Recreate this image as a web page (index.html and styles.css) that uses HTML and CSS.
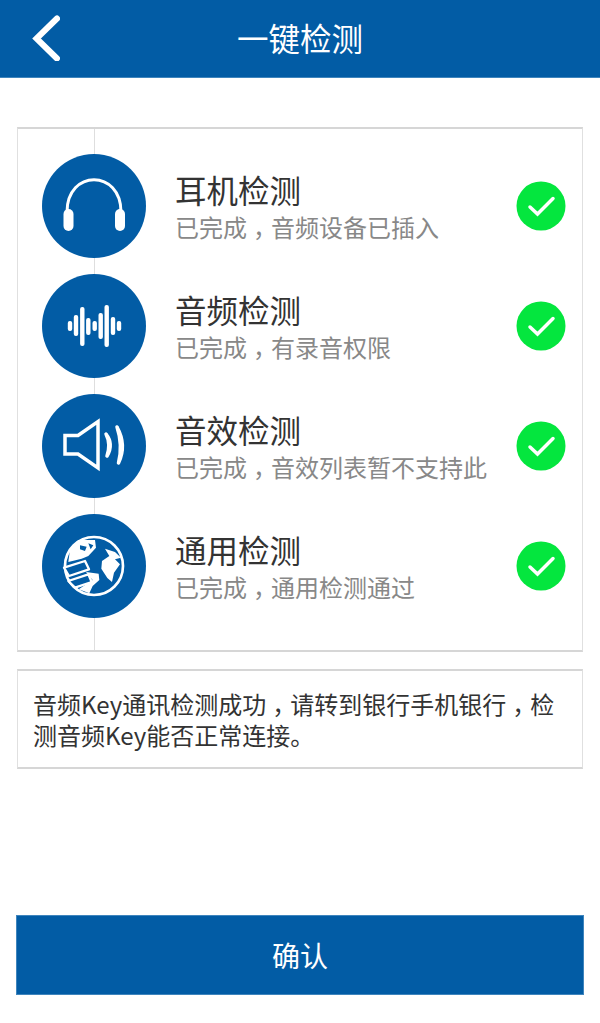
FILE: index.html
```html
<!DOCTYPE html>
<html lang="zh-CN">
<head>
<meta charset="utf-8">
<title>一键检测</title>
<link rel="stylesheet" href="styles.css">
</head>
<body>
<header class="topbar">
  <svg class="back" viewBox="0 0 30 46" width="30" height="46"><path d="M27 3.500 L6.500 23.500 L27 43.500" fill="none" stroke="#fff" stroke-width="6" stroke-linecap="round"/></svg>
  <h1 class="title">一键检测</h1>
</header>
<main class="content">
  <section class="card">
    <div class="row">
      <div class="badge"><svg viewBox="0 0 104 104" width="104" height="104"><path d="M25 58 C25 15 79 15 79 58" fill="none" stroke="#fff" stroke-width="3"/><rect x="21.500" y="55" width="10" height="22" rx="5" fill="#fff"/><rect x="73" y="55" width="10" height="22" rx="5" fill="#fff"/></svg></div>
      <div class="texts"><div class="name">耳机检测</div><div class="desc">已完成<span class="cm">，</span>音频设备已插入</div></div>
      <svg class="ok" viewBox="0 0 50 50" width="50" height="50"><circle cx="25" cy="25" r="24.500" fill="#04e63e"/><path d="M14 26 L21.500 33 L37 17.500" fill="none" stroke="#fff" stroke-width="3.500" stroke-linecap="round"/></svg>
    </div>
    <div class="row">
      <div class="badge"><svg viewBox="0 0 104 104" width="104" height="104"><g fill="#fff"><rect x="25.800" y="47" width="4.400" height="10" rx="2"/><rect x="31.800" y="41" width="4.400" height="21" rx="2"/><rect x="38.100" y="33" width="4.400" height="39" rx="2"/><rect x="44.100" y="44" width="4.400" height="17" rx="2"/><rect x="50.500" y="47" width="4.400" height="10" rx="2"/><rect x="56.500" y="39" width="4.400" height="26" rx="2"/><rect x="62.500" y="31" width="4.400" height="42" rx="2"/><rect x="68.800" y="43" width="4.400" height="18" rx="2"/><rect x="74.800" y="47" width="4.400" height="10" rx="2"/></g></svg></div>
      <div class="texts"><div class="name">音频检测</div><div class="desc">已完成<span class="cm">，</span>有录音权限</div></div>
      <svg class="ok" viewBox="0 0 50 50" width="50" height="50"><circle cx="25" cy="25" r="24.500" fill="#04e63e"/><path d="M14 26 L21.500 33 L37 17.500" fill="none" stroke="#fff" stroke-width="3.500" stroke-linecap="round"/></svg>
    </div>
    <div class="row">
      <div class="badge"><svg viewBox="0 0 104 104" width="104" height="104"><path d="M23 41.500 H36 L56 27.500 V74 L36 60 H23 Z" fill="none" stroke="#fff" stroke-width="3.500"/><path d="M64 40 Q72 50 65 62 Q69 50 64 40 Z" fill="#fff" stroke="#fff" stroke-width="3.500" stroke-linejoin="round"/><path d="M75 33 Q85 51 76.500 69 Q81 51 75 33 Z" fill="#fff" stroke="#fff" stroke-width="3.500" stroke-linejoin="round"/></svg></div>
      <div class="texts"><div class="name">音效检测</div><div class="desc">已完成<span class="cm">，</span>音效列表暂不支持此</div></div>
      <svg class="ok" viewBox="0 0 50 50" width="50" height="50"><circle cx="25" cy="25" r="24.500" fill="#04e63e"/><path d="M14 26 L21.500 33 L37 17.500" fill="none" stroke="#fff" stroke-width="3.500" stroke-linecap="round"/></svg>
    </div>
    <div class="row">
      <div class="badge"><svg viewBox="0 0 104 104" width="104" height="104"><g transform="translate(-22 -8) scale(.3333)"><circle cx="222" cy="180" r="87" fill="none" stroke="#fff" stroke-width="8"/><path d="M150 130 L175 102 L225 102 L228 125 L205 150 L185 158 L145 168 Z" fill="#fff"/><path d="M180 118 L200 122 L195 135 L180 130 Z M205 112 L220 118 L212 130 Z" fill="#025ca5"/><path d="M132 185 L195 165 L207 190 L147 210 Z" fill="#025ca5" stroke="#fff" stroke-width="7" stroke-linejoin="round"/><path d="M145 225 L205 205 L215 228 L165 245 Z" fill="#025ca5" stroke="#fff" stroke-width="7" stroke-linejoin="round"/><path d="M198 198 L236 203 L238 222 L218 240 L208 262 L176 250 L218 222 Z" fill="#fff"/><path d="M255 128 L285 138 L303 155 L285 160 L300 175 L282 200 L276 228 L262 216 L244 188 L246 165 L268 150 Z" fill="#fff"/></g></svg></div>
      <div class="texts"><div class="name">通用检测</div><div class="desc">已完成<span class="cm">，</span>通用检测通过</div></div>
      <svg class="ok" viewBox="0 0 50 50" width="50" height="50"><circle cx="25" cy="25" r="24.500" fill="#04e63e"/><path d="M14 26 L21.500 33 L37 17.500" fill="none" stroke="#fff" stroke-width="3.500" stroke-linecap="round"/></svg>
    </div>
  </section>
  <section class="note">音频Key通讯检测成功<span class="cm">，</span>请转到银行手机银行<span class="cm">，</span>检测音频Key能否正常连接。</section>
  <button class="confirm">确认</button>
</main>
</body>
</html>
```
FILE: styles.css
```css
* { box-sizing: border-box; }
html, body { margin: 0; padding: 0; }
body {
  width: 600px;
  height: 1023px;
  background: #fff;
  font-family: "Noto Sans CJK SC", Roboto, sans-serif;
  overflow: hidden;
}
.topbar {
  height: 78px;
  background: #025ca5;
  border-bottom: 1px solid #3f85bd;
  display: flex;
  align-items: center;
  justify-content: center;
  position: relative;
}
.back { position: absolute; left: 30px; top: 15px; }
.title {
  margin: -4px 0 0;
  font-size: 31.500px;
  font-weight: 400;
  color: #fff;
  line-height: 74px;
}
.content {
  padding: 49px 16px 0;
  display: flex;
  flex-direction: column;
}
.card {
  height: 525px;
  margin: 0 1px;
  border: 1px solid #e0e0e0;
  border-top: 2px solid #d6d6d6;
  border-bottom: 2px solid #d6d6d6;
  padding-top: 17px;
  display: flex;
  flex-direction: column;
  position: relative;
}
.card::before {
  content: "";
  position: absolute;
  left: 76px;
  top: 0;
  bottom: 0;
  width: 1px;
  background: #dedede;
}
.row {
  height: 120px;
  display: flex;
  align-items: center;
  padding: 0 16px 0 24px;
  position: relative;
}
.badge {
  width: 104px;
  height: 104px;
  border-radius: 50%;
  background: #025ca5;
  flex: none;
}
.badge svg { display: block; }
.texts { flex: 1; margin-left: 29px; padding-top: 4px; }
.name {
  font-size: 31.500px;
  line-height: 38px;
  color: #333;
}
.desc {
  font-size: 24px;
  line-height: 38px;
  color: #888;
}
.cm { font-feature-settings: "halt"; padding: 0 6px; }
.ok { flex: none; }
.note {
  margin: 17px 1px 0;
  height: 100px;
  border: 1px solid #e0e0e0;
  border-top: 2px solid #d6d6d6;
  border-bottom: 2px solid #d6d6d6;
  padding: 17px 15px;
  font-size: 24px;
  line-height: 31px;
  color: #333;
}
.confirm {
  margin-top: 146px;
  height: 80px;
  border: 1px solid #3f85bd;
  background: #025ca5;
  color: #fff;
  font-family: inherit;
  font-size: 28px;
}
```
